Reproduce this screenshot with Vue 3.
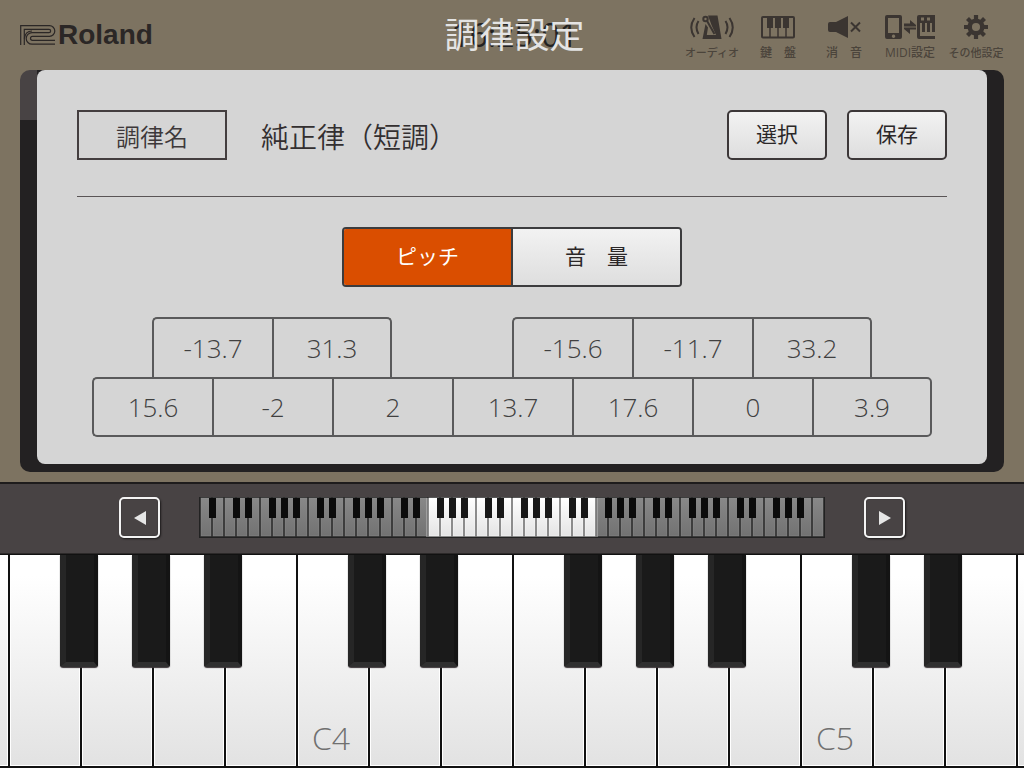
<script setup>
import { ref } from 'vue'

const tuningName = ref('純正律（短調）')
const activeTab = ref('pitch')
const song = '16:25:01'

const tools = [
  { id: 'audio', label: 'オーディオ' },
  { id: 'keys', label: '鍵　盤' },
  { id: 'mute', label: '消　音' },
  { id: 'midi', label: 'MIDI設定' },
  { id: 'other', label: 'その他設定' }
]

const sharps = [
  { note: 'cs', value: '-13.7', edge: 'first' },
  { note: 'ds', value: '31.3', edge: 'last' },
  { note: 'fs', value: '-15.6', edge: 'first' },
  { note: 'gs', value: '-11.7', edge: '' },
  { note: 'as', value: '33.2', edge: 'last' }
]
const naturals = [
  { note: 'c', value: '15.6', edge: 'first' },
  { note: 'd', value: '-2', edge: '' },
  { note: 'e', value: '2', edge: '' },
  { note: 'f', value: '13.7', edge: '' },
  { note: 'g', value: '17.6', edge: '' },
  { note: 'a', value: '0', edge: '' },
  { note: 'b', value: '3.9', edge: 'last' }
]

const names = ['C', 'D', 'E', 'F', 'G', 'A', 'B']
const hasSharpBefore = (n) => ['D', 'E', 'G', 'A', 'B'].includes(n)

const keys = Array.from({ length: 16 }, (_, i) => {
  const step = i + 2 + 21
  const name = names[step % 7]
  return { id: name + Math.floor(step / 7), name, sharp: hasSharpBefore(name) }
})

const miniWhites = Array.from({ length: 52 }, (_, i) => ({
  x: 1 + i * 12,
  lit: i >= 19 && i < 33,
  sharp: i > 0 && hasSharpBefore(names[(i + 5) % 7])
}))
const miniBlacks = miniWhites.filter((k) => k.sharp)
</script>

<template>
  <div class="app">
    <header class="header">
      <div class="logo">
        <svg class="logo-mark" viewBox="0 0 36 20" aria-hidden="true">
          <path d="M.7 20V.7H29.500a5.300 5.300 0 0 1 0 10.600H12.500a2 2 0 0 0 0 4H35" />
          <path d="M4.300 20V4.300H29a1.600 1.600 0 0 1 0 3.300H12a5.800 5.800 0 0 0 0 11.600H35" />
          <path d="M4.300 13.500C5 8.500 8 6 12 6" />
        </svg>
        <span class="logo-text">Roland</span>
      </div>
      <div class="title-stack">
        <span class="song">{{ song }}</span>
        <h1 class="title">調律設定</h1>
      </div>
      <nav class="tools">
        <button v-for="t in tools" :key="t.id" type="button" class="tool">
          <svg v-if="t.id === 'audio'" class="icon" viewBox="0 0 44 24" aria-hidden="true">
            <path d="M18 .5H27.500L31.500 24H12.500L15.500 9L18 12.500L16.800 20H26L21.500 10z" fill="currentColor" stroke="none" />
            <path d="M16.500 5l8 14" />
            <circle cx="15.500" cy="4" r="2.200" />
            <path d="M8.500 6q-4 6 0 13M4.500 3q-6.500 9.500 0 19M35.500 6q4 6 0 13M39.500 3q6.500 9.500 0 19" />
          </svg>
          <svg v-else-if="t.id === 'keys'" class="icon" viewBox="0 0 36 24" aria-hidden="true">
            <rect x="2" y="2" width="32" height="20.500" rx="1" />
            <path d="M7 2h6v11H7zM15 2h6v11h-6zM23 2h6v11h-6z" fill="currentColor" stroke="none" />
            <path d="M10 12v10M18 12v10M26 12v10" stroke-width="1.500" />
          </svg>
          <svg v-else-if="t.id === 'mute'" class="icon" viewBox="0 0 34 24" aria-hidden="true">
            <path d="M3 7h6l12-6v22L9 17H3q-2 0-2-2V9q0-2 2-2z" fill="currentColor" stroke="none" />
            <path d="M24 7.500l9 9M33 7.500l-9 9" />
          </svg>
          <svg v-else-if="t.id === 'midi'" class="icon" viewBox="0 0 52 24" aria-hidden="true">
            <path fill-rule="evenodd" d="M3 0h13q2 0 2 2v20q0 2-2 2H3q-2 0-2-2V2q0-2 2-2zM4 3v15h11V3zM9.500 19.500a1.700 1.700 0 1 0 .1 0z" fill="currentColor" stroke="none" />
            <path d="M20 8.500h6V5l6 5v2H20zM32 14.500h-6V19l-6-5v-2h12z" fill="currentColor" stroke="none" />
            <path d="M20 12h12" stroke="#7d7361" stroke-width="1" />
            <path fill-rule="evenodd" d="M35 0h16v17h-3V8h-2v9h-3V8h-2v9h-3V8h-2v13h15v3H35q-2 0-2-2V2q0-2 2-2zM37 2.500v3h3v-3zM43 2.500v3h3v-3z" fill="currentColor" stroke="none" />
          </svg>
          <svg v-else class="icon" viewBox="0 0 24 24" aria-hidden="true">
            <circle cx="12" cy="12" r="6.300" stroke-width="4.500" />
            <path d="M12 0v5M12 19v5M0 12h5M19 12h5M3.500 3.500l3.500 3.500M17 17l3.500 3.500M20.500 3.500L17 7M7 17l-3.500 3.500" stroke-width="4.200" />
          </svg>
          <span class="tool-label">{{ t.label }}</span>
        </button>
      </nav>
    </header>

    <div class="case">
      <main class="panel">
        <div class="name-row">
          <span class="name-label">調律名</span>
          <span class="name-value">{{ tuningName }}</span>
          <button type="button" class="btn">選択</button>
          <button type="button" class="btn">保存</button>
        </div>
        <div class="tabs">
          <button type="button" :class="['tab', { active: activeTab === 'pitch' }]" @click="activeTab = 'pitch'">ピッチ</button>
          <button type="button" :class="['tab', { active: activeTab === 'volume' }]" @click="activeTab = 'volume'">音　量</button>
        </div>
        <div class="octave">
          <button v-for="s in sharps" :key="s.note" type="button" :class="['cell', 'sharp', s.note, s.edge]">{{ s.value }}</button>
          <button v-for="n in naturals" :key="n.note" type="button" :class="['cell', 'natural', n.edge]">{{ n.value }}</button>
        </div>
      </main>
    </div>

    <section class="range">
      <button type="button" class="arrow" aria-label="Lower octave">
        <svg viewBox="0 0 12 14" aria-hidden="true"><path d="M12 0v14L0 7z" /></svg>
      </button>
      <svg class="mini" viewBox="0 0 626 41" aria-hidden="true">
        <defs>
          <linearGradient id="dim" x1="0" y1="0" x2="0" y2="1"><stop offset="0" stop-color="#888" /><stop offset="1" stop-color="#727272" /></linearGradient>
          <linearGradient id="lit" x1="0" y1="0" x2="0" y2="1"><stop offset="0" stop-color="#fff" /><stop offset="1" stop-color="#e4e4e4" /></linearGradient>
        </defs>
        <rect width="626" height="41" fill="#222" />
        <rect x="229" y="1" width="168" height="39" fill="#666" />
        <rect v-for="k in miniWhites" :key="k.x" :x="k.x + 1" y="1" width="10" height="38" :fill="k.lit ? 'url(#lit)' : 'url(#dim)'" :stroke="k.lit ? '#fff' : '#929292'" stroke-opacity=".5" />
        <rect v-for="k in miniBlacks" :key="k.x" :x="k.x - 3" y="1" width="7" height="20" :fill="k.lit ? '#181818' : '#0b0b0b'" />
        <path d="M228 1v39M398 1v39" stroke="#bbb" />
      </svg>
      <button type="button" class="arrow" aria-label="Higher octave">
        <svg viewBox="0 0 12 14" aria-hidden="true"><path d="M0 0v14l12-7z" /></svg>
      </button>
    </section>

    <section class="keyboard">
      <div v-for="k in keys" :key="k.id" class="white">
        <span v-if="k.sharp" class="black"></span>
        <span v-if="k.name === 'C'" class="key-name">{{ k.id }}</span>
      </div>
    </section>
  </div>
</template>

<style>
body {
  background: #7d7361;
}
</style>

<style scoped>
.app {
  display: flex;
  flex-direction: column;
  min-height: 100vh;
  overflow: hidden;
  background: #7d7361;
  color: #333;
  font-family: "Open Sans", "Noto Sans CJK JP", sans-serif;
}
* {
  box-sizing: border-box;
}
button {
  margin: 0;
  padding: 0;
  border: 0;
  background: none;
  color: inherit;
  font: inherit;
  cursor: pointer;
}
.header {
  display: grid;
  grid-template-columns: 1fr auto 1fr;
  align-items: center;
  height: 70px;
  padding: 0 15px 0 20px;
}
.logo {
  display: flex;
  align-items: center;
  gap: 2px;
  color: #2b2726;
}
.logo-mark {
  width: 36px;
  height: 20px;
  fill: none;
  stroke: currentColor;
  stroke-width: 1.2;
}
.logo-text {
  font: bold 28px/32px "Liberation Sans", sans-serif;
}
.title-stack {
  display: grid;
  place-items: center;
}
.title-stack > * {
  grid-area: 1 / 1;
}
.song {
  color: #222;
  font-size: 32px;
  font-weight: 400;
  line-height: 40px;
}
.title {
  margin: 0;
  color: #e4e4e4;
  font-size: 35px;
  font-weight: 400;
  line-height: 40px;
}
.tools {
  display: grid;
  grid-template-columns: repeat(5, 66px);
  justify-content: end;
  padding-top: 6px;
}
.tool {
  display: flex;
  flex-direction: column;
  align-items: center;
  gap: 6px;
  color: #3b3531;
}
.icon {
  height: 24px;
  fill: none;
  stroke: currentColor;
  stroke-width: 2;
}
.tool-label {
  color: #4b443b;
  font-size: 12px;
  font-weight: 500;
  line-height: 16px;
  white-space: nowrap;
}
.tool:first-child .tool-label,
.tool:last-child .tool-label {
  font-size: 11px;
}
.case {
  margin: 0 20px 10px;
  padding: 0 17px 8px;
  border-radius: 10px;
  background: linear-gradient(#484344, #484344) 0 0 / 17px 50px no-repeat #232122;
}
.panel {
  padding: 40px 40px 27px;
  border-radius: 8px;
  background: #d5d5d5;
}
.name-row {
  display: flex;
  align-items: center;
  gap: 20px;
  padding-bottom: 36px;
  border-bottom: 1px solid #5a5556;
}
.name-label {
  width: 150px;
  border: 2px solid #443e3f;
  color: #3d3839;
  font-size: 24px;
  font-weight: 350;
  line-height: 46px;
  padding-top: 2px;
  height: 50px;
  text-align: center;
}
.name-value {
  flex: 1;
  padding: 4px 0 0 14px;
  font-size: 28px;
  font-weight: 350;
  line-height: 46px;
  color: #332f30;
}
.btn {
  width: 100px;
  height: 50px;
  padding-bottom: 2px;
  border: 2px solid #3c3738;
  border-radius: 5px;
  background: linear-gradient(#f2f2f2, #dedede);
  color: #2b2728;
  font-size: 21px;
  line-height: 44px;
}
.tabs {
  display: flex;
  width: 340px;
  height: 60px;
  margin: 30px auto;
  overflow: hidden;
  border: 2px solid #3c3c3e;
  border-radius: 4px;
}
.tab {
  flex: 1;
  padding-bottom: 4px;
  background: linear-gradient(#f2f2f2, #dedede);
  color: #2b2728;
  font-size: 21px;
}
.tab + .tab {
  border-left: 2px solid #3c3c3e;
}
.tab.active {
  background: #da4e00;
  color: #fff;
}
.octave {
  display: grid;
  grid-template-columns: repeat(14, 60px);
  grid-auto-rows: 60px;
  justify-content: center;
}
.cell {
  grid-column-end: span 2;
  border: 2px solid #5a5a5b;
  border-right-width: 0;
  color: #404040;
  font-size: 26px;
  font-weight: 350;
}
.sharp {
  border-bottom-width: 0;
}
.cs {
  grid-column-start: 2;
}
.fs {
  grid-column-start: 8;
}
.last {
  border-right-width: 2px;
}
.first {
  border-top-left-radius: 5px;
}
.last {
  border-top-right-radius: 5px;
}
.natural.first {
  grid-column-start: 1;
  border-bottom-left-radius: 5px;
}
.natural.last {
  border-bottom-right-radius: 5px;
}
.range {
  display: flex;
  align-items: center;
  justify-content: center;
  gap: 39px;
  height: 72px;
  padding-bottom: 2px;
  border-top: 2px solid #1e1c1c;
  border-bottom: 1px solid #2c2929;
  background: #484344;
}
.arrow {
  display: grid;
  place-items: center;
  width: 41px;
  height: 41px;
  border: 2px solid #f4f4f4;
  border-radius: 5px;
  box-shadow: 1px 1px 2px #1c1a1a, inset 0 0 1px #1c1a1a;
}
.arrow svg {
  width: 12px;
  height: 14px;
  fill: #e6e6e6;
}
.mini {
  width: 626px;
  height: 41px;
}
.keyboard {
  display: flex;
  flex: 1;
  justify-content: center;
  min-height: 214px;
  border-top: 1px solid #111;
  border-bottom: 2px solid #111;
}
.white {
  position: relative;
  flex: 0 0 72px;
  display: flex;
  align-items: flex-end;
  justify-content: center;
  border-left: 2px solid #111;
  background: linear-gradient(#fff 10%, #e2e2e2);
  box-shadow: inset 1px -1px #fff, inset -1px 0 #fff;
}
.black {
  position: absolute;
  z-index: 1;
  top: 0;
  left: -22px;
  width: 38px;
  height: 112px;
  border: solid #111;
  border-width: 0 4px 5px 6px;
  border-color: #191919 #141414 #303030 #262626;
  border-radius: 0 0 3px 3px;
  background: #1a1a1a;
  box-shadow: 0 1px 1px #3a3236;
}
.key-name {
  padding: 0 4px 7px 0;
  color: #707070;
  font-size: 32px;
  font-weight: 350;
  line-height: 42px;
}
</style>
